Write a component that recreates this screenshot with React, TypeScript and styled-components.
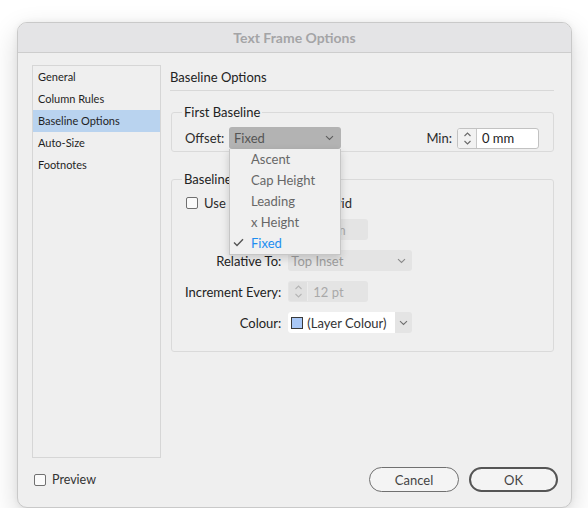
import * as React from "react";
import styled, { createGlobalStyle } from "styled-components";

const GlobalStyle = createGlobalStyle`
  html, body {
    margin: 0;
    padding: 0;
    background: #ffffff;
  }
  body {
    font-family: Lato, "Noto Sans", sans-serif;
    font-size: 13px;
    color: #2b2b2b;
  }
`;

const sections = ["General", "Column Rules", "Baseline Options", "Auto-Size", "Footnotes"];
const offsetChoices = ["Ascent", "Cap Height", "Leading", "x Height", "Fixed"];

const Chevron: React.FC<{ color?: string }> = ({ color = "#6f6f6f" }) => (
  <svg width="9" height="6" viewBox="0 0 9 6">
    <path d="M1 1.2l3.5 3.3L8 1.2" fill="none" stroke={color} strokeWidth="1.1" />
  </svg>
);

const Arrows: React.FC<{ color?: string }> = ({ color = "#6a6a6a" }) => (
  <svg width="9" height="15" viewBox="0 0 9 15">
    <path d="M1.5 5l3-3 3 3M1.5 10l3 3 3-3" fill="none" stroke={color} strokeWidth="1.1" />
  </svg>
);

const App: React.FC = () => {
  return (
    <>
      <GlobalStyle />
      <Window>
        <TitleBar>Text Frame Options</TitleBar>
        <Body>
          <Sidebar>
            {sections.map((name) => (
              <SidebarItem key={name} active={name === "Baseline Options"}>
                {name}
              </SidebarItem>
            ))}
          </Sidebar>
          <Panel>
            <Heading>Baseline Options</Heading>
            <Group>
              <Legend>First Baseline</Legend>
              <OffsetRow>
                <OffsetLabel>Offset:</OffsetLabel>
                <SelectWrap>
                  <OpenSelect>
                    <span>Fixed</span>
                    <Chevron color="#5e5e5e" />
                  </OpenSelect>
                  <Menu>
                    {offsetChoices.map((choice) => (
                      <MenuItem key={choice} selected={choice === "Fixed"}>
                        {choice === "Fixed" && (
                          <Check width="11" height="9" viewBox="0 0 11 9">
                            <path d="M1 4.6l3 3L10 1.2" fill="none" stroke="#555" strokeWidth="1.4" />
                          </Check>
                        )}
                        {choice}
                      </MenuItem>
                    ))}
                  </Menu>
                </SelectWrap>
                <Spacer />
                <MinLabel>Min:</MinLabel>
                <Spinner width={82}>
                  <SpinArrows>
                    <Arrows />
                  </SpinArrows>
                  <SpinValue>0 mm</SpinValue>
                </Spinner>
              </OffsetRow>
            </Group>
            <GridGroup>
              <Legend>Baseline Grid</Legend>
              <CheckRow>
                <CheckBox />
                <span>Use Custom Baseline Grid</span>
              </CheckRow>
              <Form>
                <FieldLabel>Start:</FieldLabel>
                <Spinner width={80} disabled>
                  <SpinArrows disabled>
                    <Arrows color="#b5b5b5" />
                  </SpinArrows>
                  <SpinValue disabled>0 mm</SpinValue>
                </Spinner>
                <FieldLabel>Relative To:</FieldLabel>
                <Select width={124} disabled>
                  <span>Top Inset</span>
                  <Chevron color="#8a8a8a" />
                </Select>
                <FieldLabel>Increment Every:</FieldLabel>
                <Spinner width={80} disabled>
                  <SpinArrows disabled>
                    <Arrows color="#b5b5b5" />
                  </SpinArrows>
                  <SpinValue disabled>12 pt</SpinValue>
                </Spinner>
                <FieldLabel>Colour:</FieldLabel>
                <ColourSelect>
                  <ColourField>
                    <Swatch />
                    <span>(Layer Colour)</span>
                  </ColourField>
                  <ColourArrow>
                    <Chevron color="#707070" />
                  </ColourArrow>
                </ColourSelect>
              </Form>
            </GridGroup>
          </Panel>
        </Body>
        <Footer>
          <PreviewToggle>
            <CheckBox />
            <span>Preview</span>
          </PreviewToggle>
          <Buttons>
            <Button>Cancel</Button>
            <Button primary>OK</Button>
          </Buttons>
        </Footer>
      </Window>
    </>
  );
};

export default App;

const Window = styled.div`
  box-sizing: border-box;
  margin: 22px 0 0 17px;
  width: 555px;
  height: 486px;
  display: flex;
  flex-direction: column;
  background: #efefef;
  border: 1px solid #c9c9c9;
  border-radius: 10px;
  box-shadow: 0 10px 28px rgba(0, 0, 0, 0.16), 0 0 6px rgba(0, 0, 0, 0.06);
  overflow: hidden;
`;

const TitleBar = styled.div`
  height: 29px;
  flex: none;
  display: flex;
  align-items: center;
  justify-content: center;
  background: #e4e4e6;
  border-bottom: 1px solid #cdcdcd;
  font-size: 14px;
  font-weight: 700;
  color: #a4a4a6;
`;

const Body = styled.div`
  display: flex;
  gap: 9px;
  padding: 12px 17px 0 14px;
`;

const Sidebar = styled.div`
  box-sizing: border-box;
  width: 129px;
  height: 393px;
  flex: none;
  border: 1px solid #d6d6d6;
  background: #efefef;
`;

const SidebarItem = styled.div<{ active?: boolean }>`
  height: 22px;
  line-height: 22px;
  padding-left: 5px;
  font-size: 11px;
  color: #1f1f1f;
  background: ${({ active }) => (active ? "#b9d3ef" : "transparent")};
`;

const Panel = styled.div`
  flex: 1;
  display: flex;
  flex-direction: column;
`;

const Heading = styled.div`
  height: 25px;
  line-height: 25px;
  border-bottom: 1px solid #d8d8d8;
  color: #222;
`;

const Group = styled.fieldset`
  position: relative;
  margin: 13px 0 0 1px;
  padding: 7px 14px 2px 13px;
  border: 1px solid #dadada;
  border-radius: 3px;
  min-width: 0;
`;

const GridGroup = styled(Group)`
  margin-top: 19px;
  padding-top: 9px;
  padding-bottom: 18px;
  z-index: 0;
`;

const Legend = styled.legend`
  margin-left: -3px;
  padding: 0 2px;
  line-height: 16px;
  color: #222;
`;

const OffsetRow = styled.div`
  display: flex;
  align-items: center;
  height: 22px;
  position: relative;
  z-index: 2;
`;

const OffsetLabel = styled.span`
  width: 44px;
`;

const MinLabel = styled.span`
  margin-right: 5px;
`;

const Spacer = styled.div`
  flex: 1;
`;

const SelectWrap = styled.div`
  position: relative;
`;

const OpenSelect = styled.div`
  box-sizing: border-box;
  width: 112px;
  height: 22px;
  display: flex;
  align-items: center;
  justify-content: space-between;
  padding: 0 7px 0 5px;
  background: #b3b3b3;
  border-radius: 3px;
  color: #555;
`;

const Menu = styled.div`
  position: absolute;
  top: 100%;
  left: 0;
  box-sizing: border-box;
  width: 112px;
  background: #f0f0f0;
  border: 1px solid #c6c6c6;
  border-top: none;
  box-shadow: 0 3px 8px rgba(0, 0, 0, 0.16);
  z-index: 5;
`;

const MenuItem = styled.div<{ selected?: boolean }>`
  position: relative;
  height: 21px;
  line-height: 21px;
  padding-left: 21px;
  color: ${({ selected }) => (selected ? "#1d8ef0" : "#676767")};
`;

const Check = styled.svg`
  position: absolute;
  left: 3px;
  top: 5px;
`;

const Spinner = styled.div<{ width: number; disabled?: boolean }>`
  box-sizing: border-box;
  width: ${({ width }) => width}px;
  height: 21px;
  display: flex;
  border: 1px solid ${({ disabled }) => (disabled ? "transparent" : "#c2c2c2")};
  border-radius: 3px;
  background: ${({ disabled }) => (disabled ? "#e4e4e4" : "#ffffff")};
`;

const SpinArrows = styled.div<{ disabled?: boolean }>`
  width: 18px;
  flex: none;
  display: flex;
  align-items: center;
  justify-content: center;
  background: ${({ disabled }) => (disabled ? "#e0e0e0" : "#f2f2f2")};
  border-right: 1px solid ${({ disabled }) => (disabled ? "#ececec" : "#c8c8c8")};
  border-radius: 2px 0 0 2px;
`;

const SpinValue = styled.div<{ disabled?: boolean }>`
  display: flex;
  align-items: center;
  padding-left: 5px;
  color: ${({ disabled }) => (disabled ? "#a9a9a9" : "#222")};
`;

const CheckRow = styled.div`
  display: flex;
  align-items: center;
  gap: 6px;
  height: 14px;
  margin-left: 1px;
`;

const CheckBox = styled.span`
  box-sizing: border-box;
  width: 12px;
  height: 12px;
  flex: none;
  border: 1px solid #707070;
  border-radius: 2px;
  background: #fafafa;
`;

const Form = styled.div`
  display: grid;
  grid-template-columns: max-content auto;
  grid-auto-rows: 21px;
  column-gap: 7px;
  row-gap: 10px;
  margin-top: 9px;
  justify-items: start;
`;

const FieldLabel = styled.span`
  justify-self: end;
  align-self: center;
  white-space: nowrap;
  color: #222;
`;

const Select = styled.div<{ width: number; disabled?: boolean }>`
  box-sizing: border-box;
  width: ${({ width }) => width}px;
  height: 21px;
  display: flex;
  align-items: center;
  justify-content: space-between;
  padding: 0 6px 0 3px;
  border-radius: 3px;
  background: #e4e4e4;
  color: ${({ disabled }) => (disabled ? "#9d9d9d" : "#333")};
`;

const ColourSelect = styled.div`
  box-sizing: border-box;
  width: 124px;
  height: 21px;
  display: flex;
  border-radius: 3px;
  overflow: hidden;
  background: #e4e4e4;
`;

const ColourField = styled.div`
  width: 104px;
  display: flex;
  align-items: center;
  gap: 4px;
  padding-left: 3px;
  background: #ffffff;
  color: #333;
  white-space: nowrap;
`;

const Swatch = styled.span`
  box-sizing: border-box;
  width: 12px;
  height: 12px;
  flex: none;
  background: #a9c8f7;
  border: 1px solid #3a3a3a;
`;

const ColourArrow = styled.div`
  flex: 1;
  display: flex;
  align-items: center;
  justify-content: center;
`;

const Footer = styled.div`
  display: flex;
  align-items: center;
  justify-content: space-between;
  padding: 9px 13px 14px 16px;
`;

const PreviewToggle = styled.label`
  display: flex;
  align-items: center;
  gap: 6px;
  font-size: 12.5px;
  color: #333;
`;

const Buttons = styled.div`
  display: flex;
  gap: 10px;
`;

const Button = styled.button<{ primary?: boolean }>`
  box-sizing: border-box;
  width: ${({ primary }) => (primary ? 89 : 90)}px;
  height: 25px;
  border: ${({ primary }) => (primary ? "2px solid #555" : "1px solid #707070")};
  border-radius: 13px;
  background: #f4f4f4;
  font-family: Lato, "Noto Sans", sans-serif;
  font-size: 13px;
  color: #444;
  padding: 0;
`;
